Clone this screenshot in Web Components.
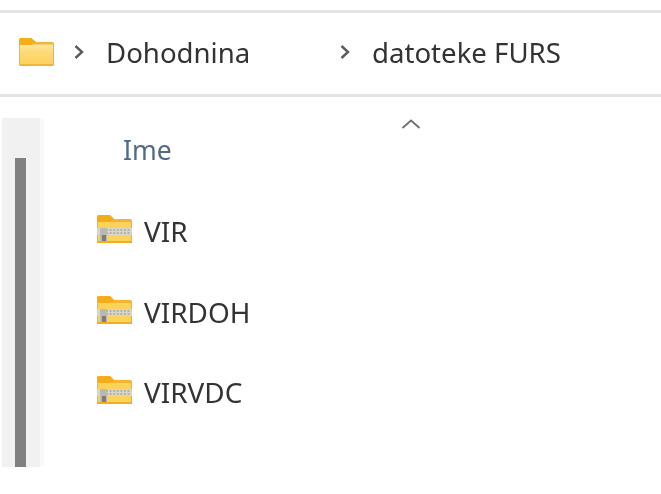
<!DOCTYPE html>
<html>
<head>
<meta charset="utf-8">
<title>datoteke FURS</title>
<style>
  html, body { margin: 0; background: #fff; }
  body { width: 661px; height: 494px; overflow: hidden; font-family: "Noto Sans", "Open Sans", sans-serif; }
</style>
</head>
<body>
<explorer-window>
  <path-bar slot="bar">
    <folder-icon></folder-icon>
    <path-crumb width="266">Dohodnina</path-crumb>
    <path-crumb>datoteke FURS</path-crumb>
  </path-bar>
  <scroll-rail slot="rail"></scroll-rail>
  <file-list slot="list">
    <file-row>VIR</file-row>
    <file-row>VIRDOH</file-row>
    <file-row>VIRVDC</file-row>
  </file-list>
</explorer-window>

<script>
class ExplorerWindow extends HTMLElement {
  constructor() {
    super();
    this.attachShadow({ mode: 'open' }).innerHTML = `
      <style>
        :host { display: block; padding-top: 10px; filter: blur(.5px); }
        .body { display: flex; height: 349px; padding: 21px 0 0 2px; }
      </style>
      <slot name="bar"></slot>
      <div class="body">
        <slot name="rail"></slot>
        <slot name="list"></slot>
      </div>`;
  }
}

class PathBar extends HTMLElement {
  constructor() {
    super();
    this.attachShadow({ mode: 'open' }).innerHTML = `
      <style>
        :host {
          display: flex; align-items: center; box-sizing: border-box;
          height: 87px; padding: 0 0 4px 19px;
          border-top: 3px solid #e4e4e4; border-bottom: 3px solid #e4e4e4;
        }
      </style>
      <slot></slot>`;
  }
}

class PathCrumb extends HTMLElement {
  constructor() {
    super();
    this.attachShadow({ mode: 'open' }).innerHTML = `
      <style>
        :host { display: flex; align-items: center; gap: 22.5px; flex: none; font-size: 27.6px; color: #333; }
        .label { white-space: nowrap; }
        svg { flex: none; width: 11px; height: 16px; }
      </style>
      <svg viewBox="0 0 11 16"><path d="M2.5 2 9 8 2.500 14" fill="none" stroke="#5c5c5c" stroke-width="2.4"/></svg>
      <div class="label"><slot></slot></div>`;
    if (this.hasAttribute('width')) this.style.width = this.getAttribute('width') + 'px';
  }
}

class FolderIcon extends HTMLElement {
  constructor() {
    super();
    this.attachShadow({ mode: 'open' }).innerHTML = `
      <style>:host { display: block; flex: none; width: 35px; height: 28px; margin-right: 18.5px; } svg { display: block; }</style>
      <svg width="35" height="28" viewBox="0 0 35 28">
        <defs><linearGradient id="f" x1="0" y1="0" x2="0" y2="1">
          <stop offset="0" stop-color="#fee7a0"/><stop offset=".35" stop-color="#fddb78"/><stop offset="1" stop-color="#fcd25e"/>
        </linearGradient></defs>
        <path d="M0 2a2 2 0 0 1 2-2h10l5 4h16a2 2 0 0 1 2 2v4H0z" fill="#f2b63a"/>
        <rect y="5" width="35" height="23" rx="1.5" fill="#f0b53c"/>
        <rect x="1" y="6.5" width="33" height="19.5" fill="url(#f)"/>
        <path d="M0 2a2 2 0 0 1 2-2h10l5 4-5 3H0z" fill="#f5ae17"/>
      </svg>`;
  }
}

class ScrollRail extends HTMLElement {
  constructor() {
    super();
    this.attachShadow({ mode: 'open' }).innerHTML = `
      <style>
        :host {
          display: flex; justify-content: center; align-items: flex-end; flex: none;
          box-sizing: border-box; width: 38px; height: 100%;
          background: #f1f1f1; padding-right: 2px;
          margin-right: 4px; box-shadow: 5px 0 0 -1px #f9f9f9;
        }
        .thumb { width: 11px; height: 309px; background: #808080; }
      </style>
      <div class="thumb"></div>`;
  }
}

class FileList extends HTMLElement {
  constructor() {
    super();
    this.attachShadow({ mode: 'open' }).innerHTML = `
      <style>
        :host { display: flex; flex-direction: column; flex: 1; }
        .sort { height: 12px; padding-left: 357px; }
        .sort svg { display: block; width: 20px; height: 12px; }
        .ime { font-size: 26.5px; line-height: 36px; margin: 2px 0 0 79px; color: #536a87; }
        .rows { display: flex; flex-direction: column; gap: 52.5px; margin-top: 47px; padding-left: 53px; }
      </style>
      <div class="sort"><svg viewBox="0 0 20 12"><path d="M1.5 10 10 2.5 18.5 10" fill="none" stroke="#6f6f6f" stroke-width="1.8"/></svg></div>
      <div class="ime">Ime</div>
      <div class="rows"><slot></slot></div>`;
  }
}

class FileRow extends HTMLElement {
  constructor() {
    super();
    this.attachShadow({ mode: 'open' }).innerHTML = `
      <style>
        :host { display: flex; align-items: center; gap: 12px; height: 28px; font-size: 27.9px; color: #333; }
        svg { flex: none; }
        span { padding-top: 4px; white-space: nowrap; }
      </style>
      <svg width="35" height="28" viewBox="0 0 35 28">
        <path d="M0 2a2 2 0 0 1 2-2h11l4 4h16a2 2 0 0 1 2 2v4H0z" fill="#f6b52c"/>
        <rect y="5" width="35" height="23" rx="1.5" fill="#f5b430"/>
        <rect x="1" y="7" width="33" height="19" fill="#fbd25c"/>
        <path d="M0 2a2 2 0 0 1 2-2h11l4 4-4 3H0z" fill="#f6ab18"/>
        <rect y="13" width="35" height="7" fill="#d8d6c8"/>
        <path d="M9 15h24M9 18h24" stroke="#8f8f88" stroke-width="1.2" stroke-dasharray="2 1.6"/>
        <rect x="3" y="13" width="7" height="14" rx="1" fill="#b9b9b2"/>
        <rect x="5" y="20" width="4" height="6" fill="#7d7d78"/>
        <rect y="26" width="35" height="2" fill="#f3ae20"/>
      </svg>
      <span><slot></slot></span>`;
  }
}

customElements.define('explorer-window', ExplorerWindow);
customElements.define('path-bar', PathBar);
customElements.define('path-crumb', PathCrumb);
customElements.define('folder-icon', FolderIcon);
customElements.define('scroll-rail', ScrollRail);
customElements.define('file-list', FileList);
customElements.define('file-row', FileRow);
</script>
</body>
</html>
